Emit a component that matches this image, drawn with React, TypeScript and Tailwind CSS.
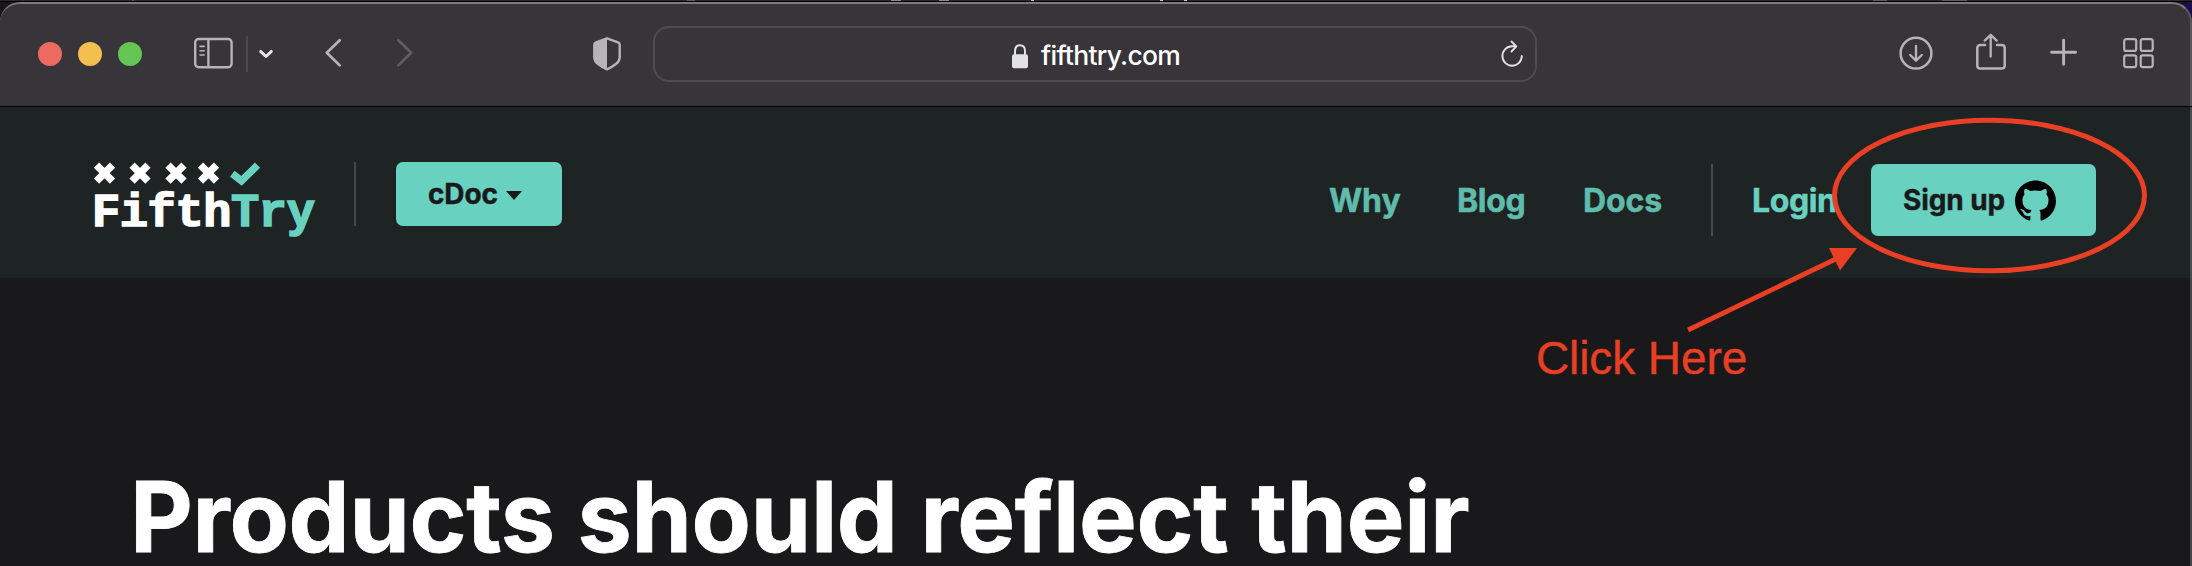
import { ReactNode } from "react";
import { SiGithub } from "react-icons/si";

function Icon({ w, h, cls, children }: { w: number; h: number; cls?: string; children: ReactNode }) {
  return (
    <svg width={w} height={h} viewBox={`0 0 ${w} ${h}`} fill="none" className={`shrink-0 ${cls ?? ""}`}>
      {children}
    </svg>
  );
}

/* Sliver of the window behind the browser */
function Backdrop() {
  return (
    <div className="flex h-px w-full shrink-0 bg-[#29272c]">
      <i className="ml-[132px] h-px w-0.5 bg-[#57555a]" />
      <i className="ml-[553px] h-px w-2 bg-[#5d5d60]" />
      <i className="ml-[196px] h-px w-2.5 bg-[#8b8b8d]" />
      <i className="ml-[38px] h-px w-2.5 bg-[#8b8b8d]" />
      <i className="ml-[82px] h-px w-[3px] bg-[#c5c5c5]" />
      <i className="ml-[126px] h-px w-[3px] bg-[#c5c5c5]" />
      <i className="ml-[21px] h-px w-[3px] bg-[#c5c5c5]" />
      <i className="ml-[686px] h-px w-3.5 bg-[#5d5d60]" />
      <i className="ml-[55px] h-px w-[25px] bg-[#5d5d60]" />
    </div>
  );
}

function Toolbar() {
  return (
    <header className="flex h-[104px] w-full shrink-0 items-start rounded-t-[20px] border-t-2 border-r-2 border-t-[#7d7b78] border-r-[#5a585b] bg-[#37343a] pl-[38px] text-[#b6b3b9]">
      <div className="mt-[38px] flex gap-4">
        <i className="size-6 rounded-full bg-[#ed6a5f]" />
        <i className="size-6 rounded-full bg-[#f5bf4f]" />
        <i className="size-6 rounded-full bg-[#62c554]" />
      </div>
      <Icon w={40} h={32} cls="ml-[51px] mt-[33px]">
        <g stroke="currentColor" strokeWidth="2.4">
          <rect x="2.2" y="2" width="36.4" height="28.2" rx="3.4" />
          <path d="M15.400 2v28.500" />
          <path d="M7 9.400h4.200M7 13.700h4.200M7 18h4.200" strokeWidth="1.600" strokeLinecap="round" />
        </g>
      </Icon>
      <i className="ml-[13px] mt-8 h-9 w-0.5 bg-[#4b494e]" />
      <Icon w={16} h={12} cls="ml-[10px] mt-11 text-[#e6e5e7]">
        <path d="M2.600 3.400L8 8.500l5.400-5.100" stroke="currentColor" strokeWidth="2.900" strokeLinecap="round" strokeLinejoin="round" />
      </Icon>
      <Icon w={18} h={30} cls="ml-[50px] mt-[34px]">
        <path d="M15.700 2.200L2.800 14.700l12.900 12.700" stroke="currentColor" strokeWidth="2.700" strokeLinecap="round" strokeLinejoin="round" />
      </Icon>
      <Icon w={18} h={30} cls="ml-[54px] mt-[34px] text-[#5f5c62]">
        <path d="M2.300 2.200l12.900 12.500L2.300 27.400" stroke="currentColor" strokeWidth="2.700" strokeLinecap="round" strokeLinejoin="round" />
      </Icon>
      <Icon w={28} h={34} cls="ml-[179px] mt-[33px]">
        <path d="M14 1.300L25 5.400Q26.700 6 26.700 7.800V20Q26.700 24 23.500 26.500Q19.500 29.800 14 32.400Q8.500 29.800 4.500 26.500Q1.300 24 1.300 20V7.800Q1.300 6 3 5.400Z" stroke="currentColor" strokeWidth="2.400" strokeLinejoin="round" />
        <path d="M14 1.300L3 5.400Q1.300 6 1.300 7.800V20Q1.300 24 4.500 26.500Q8.500 29.800 14 32.400Z" fill="currentColor" />
      </Icon>

      <div className="ml-8 mt-[22px] flex h-14 w-[884px] shrink-0 items-center rounded-[16px] border-2 border-[#4e4b51] pl-[356px] text-white">
        <Icon w={18} h={26} cls="mt-1 text-[#e2e2e3]">
          <path d="M4 12V8.200Q4 2.200 9 2.200T14 8.200V12" stroke="currentColor" strokeWidth="2" />
          <rect x="1" y="11.200" width="16" height="14" rx="2" fill="currentColor" />
        </Icon>
        <span className="mt-0.5 ml-3 w-[459px] text-[26.500px] leading-8 font-medium tracking-[-0.7px]">fifthtry.com</span>
        <Icon w={24} h={28} cls="text-[#e2e2e3]">
          <path d="M21.800 16A9.700 9.700 0 1 1 12.100 6.300H16M11.500 1.500L16.300 6.300L11.500 11.500" stroke="currentColor" strokeWidth="1.900" strokeLinecap="round" strokeLinejoin="round" />
        </Icon>
      </div>

      <Icon w={34} h={34} cls="ml-[362px] mt-8">
        <g stroke="currentColor" strokeWidth="2.500" strokeLinecap="round" strokeLinejoin="round">
          <circle cx="17" cy="17.200" r="15.400" />
          <path d="M17 9.800v14.600M11.200 19l5.800 5.600L22.800 19" strokeWidth="2.300" />
        </g>
      </Icon>
      <Icon w={30} h={38} cls="ml-[43px] mt-[29px]">
        <g stroke="currentColor" strokeWidth="2.500" strokeLinecap="round" strokeLinejoin="round">
          <path d="M9 12H4.400Q1.300 12 1.300 15.100V32.400Q1.300 35.500 4.400 35.500H25.600Q28.700 35.500 28.700 32.400V15.100Q28.700 12 25.600 12H21" />
          <path d="M14.700 23.500V2M8.700 7.600l6-5.800 6 5.800" strokeWidth="2.300" />
        </g>
      </Icon>
      <Icon w={28} h={28} cls="ml-11 mt-[34px]">
        <path d="M1.600 14.300H25.600M13.600 2.300V26.300" stroke="currentColor" strokeWidth="2.900" strokeLinecap="round" />
      </Icon>
      <Icon w={32} h={32} cls="ml-[45px] mt-[33px]">
        <g stroke="currentColor" strokeWidth="2.200">
          <rect x="1.200" y="2.100" width="12" height="11.800" rx="2" />
          <rect x="17.700" y="2.100" width="12" height="11.800" rx="2" />
          <rect x="1.200" y="18.300" width="12" height="11.800" rx="2" />
          <rect x="17.700" y="18.300" width="12" height="11.800" rx="2" />
        </g>
      </Icon>
    </header>
  );
}

function Logo() {
  return (
    <div className="flex h-[78px] w-[222px] flex-col">
      <Icon w={168} h={24} cls="ml-px">
        {[12, 47.5, 83.500, 116].map((cx) => (
          <path key={cx} d={`M${cx - 8} 4l16 16M${cx + 8} 4l-16 16`} transform="translate(-.500 -.800)" stroke="#fff" strokeWidth="7.400" />
        ))}
        <path d="M139.300 11.800L148.500 18.800L164.500 3.200" stroke="#69d1c0" strokeWidth="7.400" />
      </Icon>
      <span className="mt-px font-['Liberation_Mono'] text-[47px] leading-[54px] font-bold tracking-[-0.4px] text-white [-webkit-text-stroke:1.600px_currentColor]">
        Fifth<span className="text-[#69d1c0] [-webkit-text-stroke:1.600px_#69d1c0]">Try</span>
      </span>
    </div>
  );
}

function Nav() {
  return (
    <nav className="flex h-[171px] shrink-0 items-start border-r-2 border-[#4a4c4d] bg-[#1e2323] pt-[55px] pl-[92px] font-bold">
      <Logo />
      <i className="ml-10 h-16 w-0.5 bg-[#464849]" />
      <button className="ml-10 flex h-16 w-[166px] items-center rounded-[7px] bg-[#69d1c0] pl-8 text-[28px] text-[#19191b]">
        <span className="w-[77px] pb-px text-left tracking-[-0.1px] [-webkit-text-stroke:0.400px_currentColor]">cDoc</span>
        <Icon w={18} h={10} cls="mt-1">
          <path d="M1 0h16L9 9z" fill="#19191b" />
        </Icon>
      </button>
      <div className="ml-[767px] mt-0.5 flex h-[72px] items-center text-[32px] text-[#5fbcab]">
        <span className="w-32 pt-0.5 tracking-[-0.1px] [-webkit-text-stroke:0.500px_currentColor]">Why</span>
        <span className="w-[126px] pt-0.5 tracking-[-0.3px] [-webkit-text-stroke:0.500px_currentColor]">Blog</span>
        <span className="w-32 pt-0.5 tracking-[-0.1px] [-webkit-text-stroke:0.500px_currentColor]">Docs</span>
        <i className="h-[72px] w-0.5 bg-[#464849]" />
        <span className="ml-[39px] w-[119px] pt-0.5 tracking-[-0.4px] text-[#69d1c0] [-webkit-text-stroke:0.500px_currentColor]">Login</span>
        <button className="flex h-[72px] w-[225px] items-center rounded-[7px] bg-[#69d1c0] pl-8 text-[28px] text-[#19191b]">
          <span className="w-28 text-left tracking-[-0.1px] whitespace-nowrap [-webkit-text-stroke:0.400px_currentColor]">Sign up</span>
          <SiGithub size={41} className="text-black" />
        </button>
      </div>
    </nav>
  );
}

/* Hand-placed markup over the page: ring, arrow and caption */
function Annotation() {
  return (
    <div className="absolute inset-0">
      <Icon w={2192} h={566}>
        <ellipse cx="1989.500" cy="195.500" rx="155" ry="75.300" stroke="#e93f24" strokeWidth="5" />
        <path d="M1688 330L1842 256" stroke="#e93f24" strokeWidth="4.800" />
        <path d="M1857 248L1829 248L1840 270.500Z" fill="#e93f24" />
      </Icon>
      <span className="absolute top-[332px] left-[1536px] font-['Liberation_Sans',sans-serif] text-[46px] leading-[52px] tracking-[-0.1px] whitespace-nowrap text-[#e93f24] [-webkit-text-stroke:0.400px_currentColor]">
        Click Here
      </span>
    </div>
  );
}

export default function App() {
  return (
    <div className="relative flex h-[566px] w-[2192px] flex-col overflow-hidden bg-black font-['Inter',sans-serif]">
      <Backdrop />
      <div className="mt-px flex flex-col bg-[linear-gradient(90deg,#17161c_2180px,#1d0a50_2188px)]">
        <Toolbar />
      </div>
      <div className="h-px bg-black" />
      <Nav />
      <main className="flex h-[288px] items-start border-r-2 border-[#474748] bg-[#19191b]">
        <h1 className="mt-[194px] ml-[130px] text-[97px] leading-[90px] font-bold tracking-[-0.3px] whitespace-nowrap text-white [-webkit-text-stroke:0.800px_currentColor]">
          Products should reflect their
        </h1>
      </main>
      <Annotation />
    </div>
  );
}
